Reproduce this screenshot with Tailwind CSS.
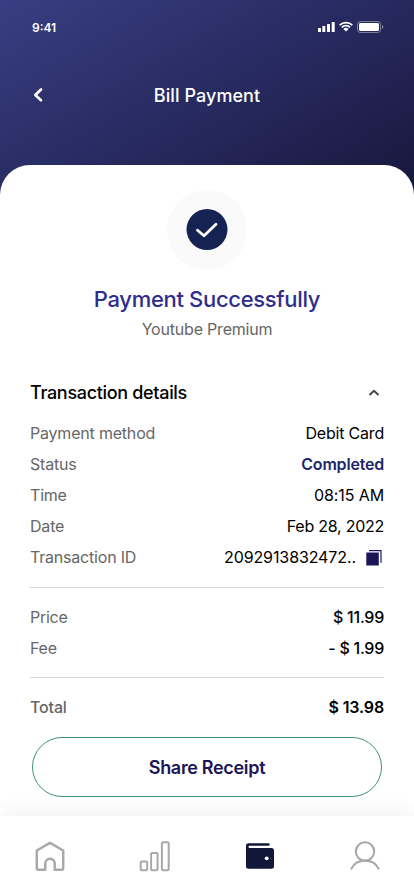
<!DOCTYPE html>
<html lang="en">
<head>
<meta charset="utf-8">
<meta name="viewport" content="width=device-width, initial-scale=1">
<title>Bill Payment</title>
<script src="https://cdn.jsdelivr.net/npm/@tailwindcss/browser@4"></script>
</head>
<body class="bg-white font-['Inter',sans-serif]">
<div class="flex h-[896px] w-[414px] flex-col overflow-hidden bg-[linear-gradient(150deg,#383e82_0px,#292d65_165px,#232354_255px,#17183c_370px)]">
  <header class="h-[165px] shrink-0 text-white">
    <div class="flex h-[54px] items-center justify-between pl-8 pr-[30px]">
      <span class="pt-px text-[12px] leading-4 font-semibold">9:41</span>
      <svg class="h-[14px] w-[67px]" viewBox="0 0 67 14" fill="none">
        <g fill="#fff">
          <rect x="1" y="8" width="3" height="4" rx=".6"/>
          <rect x="5.3" y="6" width="3" height="6" rx=".6"/>
          <rect x="10" y="4" width="3" height="8" rx=".6"/>
          <rect x="14.7" y="2" width="3" height="10" rx=".6"/>
          <path d="M26.4 8.900a3.800 3.800 0 0 1 5.200 0L29 11.500z"/>
        </g>
        <path d="M22.700 5.100a9.100 9.100 0 0 1 12.600 0M24.900 7.300a6 6 0 0 1 8.200 0" stroke="#fff" stroke-width="1.800"/>
        <rect x="40.500" y="1.500" width="23" height="11" rx="2.700" stroke="#fff" stroke-opacity=".4"/>
        <rect x="42" y="3" width="20" height="8" rx="1.400" fill="#fff"/>
        <path d="M65 5v4c.8-.4 1.300-1.100 1.300-2s-.5-1.600-1.300-2z" fill="#fff" fill-opacity=".45"/>
      </svg>
    </div>
    <div class="grid h-[83px] grid-cols-[1fr_auto_1fr] items-center pl-8">
      <svg class="mb-[2px] h-4 w-3" viewBox="0 0 12 16" fill="none" stroke="#fff" stroke-width="2.700" stroke-linecap="round" stroke-linejoin="round"><path d="M9 2.500 3.300 8 9 13.200"/></svg>
      <h1 class="relative -left-4 text-[18px] leading-6 font-medium tracking-[0.08px]">Bill Payment</h1>
    </div>
  </header>

  <main class="flex h-[651px] shrink-0 flex-col rounded-t-[30px] bg-white pt-[25px]">
    <div class="mx-auto flex size-20 shrink-0 items-center justify-center rounded-full bg-[#fafafa]">
      <svg class="size-[42px]" viewBox="0 0 42 42" fill="none"><circle cx="21" cy="20.500" r="20.500" fill="#162252"/><path d="M11.500 21.200 18 26.800 30 15.200" stroke="#fff" stroke-width="2.800" stroke-linecap="round" stroke-linejoin="round"/></svg>
    </div>
    <h2 class="mt-[14px] text-center text-[22px] leading-[30px] font-medium tracking-[-0.32px] text-[#2d2d8e]">Payment Successfully</h2>
    <p class="mt-[5px] text-center text-[16px] leading-5 tracking-[-0.2px] text-[#666]">Youtube Premium</p>

    <section class="px-[30px]">
      <div class="mt-[42px] flex h-6 items-center justify-between">
        <h3 class="text-[18px] leading-6 font-medium tracking-[-0.32px] text-black">Transaction details</h3>
        <svg class="mr-1 h-3 w-3" viewBox="0 0 12 12" fill="none" stroke="#444" stroke-width="1.900"><path d="M1.500 8 6 3.700 10.500 8"/></svg>
      </div>
      <dl class="mt-[13px] text-[16px] leading-[31px] tracking-[-0.2px] text-black">
        <div class="flex h-[31px] justify-between"><dt class="text-[#666]">Payment method</dt><dd>Debit Card</dd></div>
        <div class="flex h-[31px] justify-between"><dt class="text-[#666]">Status</dt><dd class="font-semibold text-[#1e276a]">Completed</dd></div>
        <div class="flex h-[31px] justify-between"><dt class="text-[#666]">Time</dt><dd class="tracking-[-0.1px]">08:15 AM</dd></div>
        <div class="flex h-[31px] justify-between"><dt class="text-[#666]">Date</dt><dd class="tracking-[-0.25px]">Feb 28, 2022</dd></div>
        <div class="flex h-[31px] justify-between"><dt class="text-[#666]">Transaction ID</dt>
          <dd class="flex items-center gap-[10px] pr-[2px] tracking-[-0.1px]">2092913832472..
            <svg class="size-4" viewBox="0 0 16 16" fill="none"><path d="M3 .7h12v12" stroke="#1b1464" stroke-width="1.200"/><rect x=".3" y="2.500" width="12.500" height="13" fill="#1b1456"/></svg>
          </dd></div>
      </dl>
      <dl class="mt-[14px] border-y border-[#d9d9d9] pt-[14px] pb-[13px] text-[16px] leading-[31px] tracking-[-0.25px]">
        <div class="flex h-[31px] justify-between"><dt class="text-[#666]">Price</dt><dd class="font-medium">$ 11.99</dd></div>
        <div class="flex h-[31px] justify-between"><dt class="text-[#666]">Fee</dt><dd class="font-medium">- $ 1.99</dd></div>
      </dl>
      <div class="mt-[14px] flex h-[31px] justify-between text-[16px] leading-[31px] tracking-[-0.15px]"><span class="font-medium text-[#666]">Total</span><span class="font-semibold">$ 13.98</span></div>
      <button class="mx-[2px] mt-[14px] block h-[60px] w-[350px] rounded-full border border-[#40917e] pt-[2px] text-[18px] leading-6 font-semibold tracking-[-0.32px] text-[#1b1456]">Share Receipt</button>
    </section>
  </main>

  <nav class="flex h-20 shrink-0 items-center justify-between bg-white pr-[34px] pl-[35px] shadow-[0_-4px_20px_rgba(0,0,0,0.06)]">
    <svg class="size-[30px]" viewBox="0 0 30 30" fill="none" stroke="#a9a9a9" stroke-width="2.500" stroke-linejoin="round"><path d="M1.800 9.500 15 1.900l13.200 7.600v18q0 1.200-1.200 1.200H19.700V22.500a4.700 4.700 0 0 0-9.400 0v6.200H3q-1.200 0-1.200-1.200z"/></svg>
    <svg class="size-[30px] overflow-visible" viewBox="0 0 30 30" fill="none" stroke="#a9a9a9" stroke-width="2"><rect x=".7" y="20.500" width="6.500" height="8.700" rx="1"/><rect x="11.100" y="12" width="6.500" height="17.200" rx="1"/><rect x="21.900" y="1.200" width="6.800" height="28" rx="1"/></svg>
    <svg class="size-[30px]" viewBox="0 0 30 30" fill="none"><path d="M3.500 2.300h20a1.200 1.200 0 0 1 0 2.400H4.600a.9.900 0 0 0 0 2.300h21.900a2.500 2.500 0 0 1 2.500 2.500v15.700a2.500 2.500 0 0 1-2.500 2.500h-23A2.500 2.500 0 0 1 1 25.200V4.800a2.500 2.500 0 0 1 2.500-2.500z" fill="#111738"/><circle cx="21.700" cy="17.300" r="1.900" fill="#fff"/></svg>
    <svg class="size-[30px]" viewBox="0 0 30 30" fill="none" stroke="#a9a9a9" stroke-width="2.100" stroke-linecap="round"><circle cx="15" cy="10.500" r="9.200"/><path d="M1.500 27.700C3.800 22.500 9 19.600 15 19.600s11.200 2.900 13.500 8.100"/></svg>
  </nav>
</div>
</body>
</html>
